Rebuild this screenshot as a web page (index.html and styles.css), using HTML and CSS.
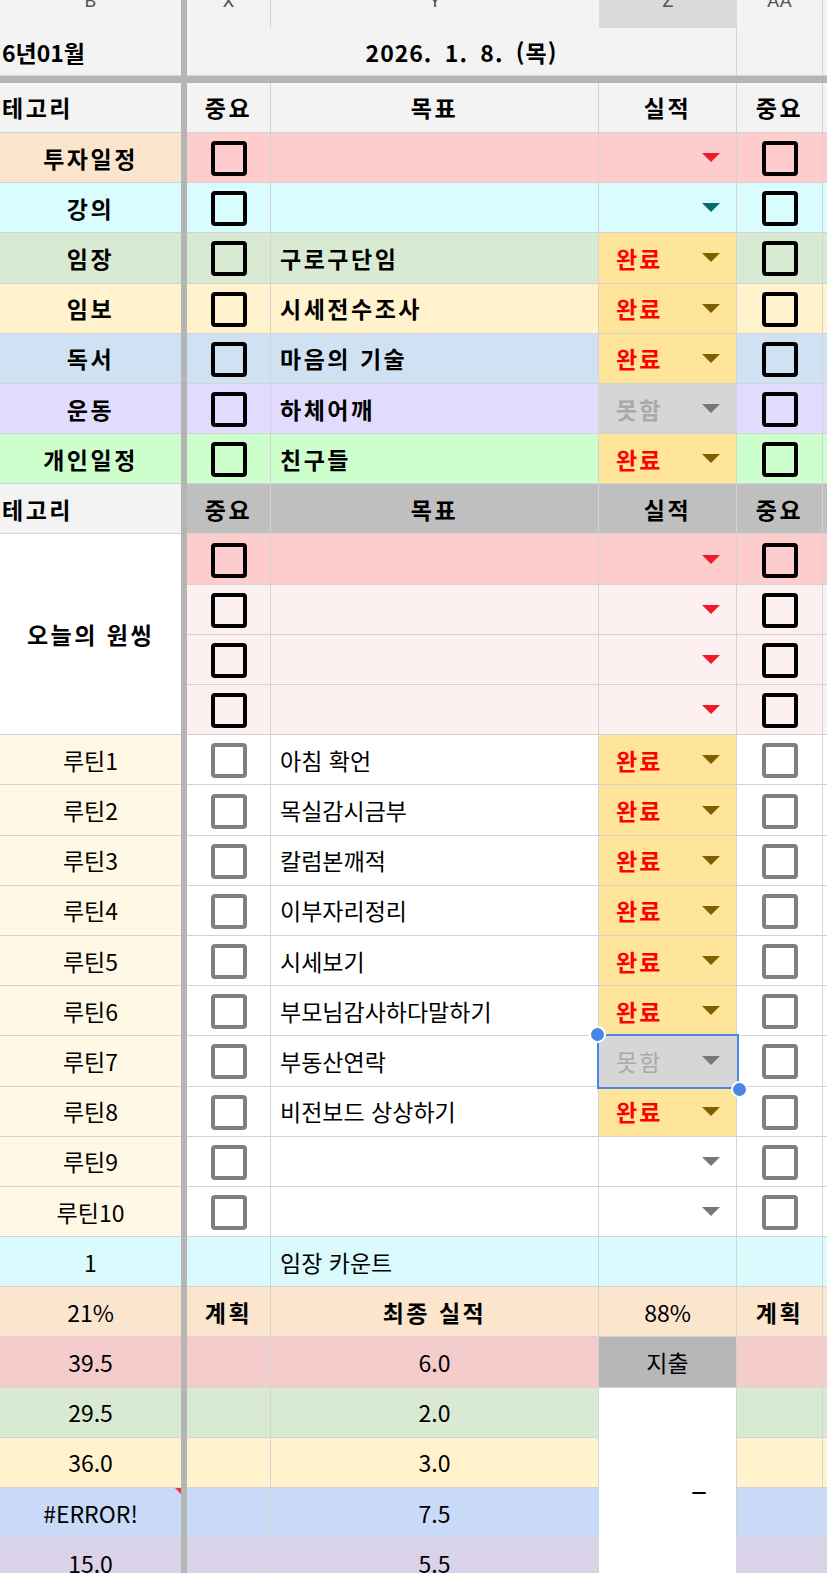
FILE: index.html
```html
<!DOCTYPE html>
<html lang="ko">
<head>
<meta charset="utf-8">
<title>Sheet</title>
<link rel="stylesheet" href="styles.css">
</head>
<body>
<div class="viewport">
  <div class="sheet">
    <div class="freeze-v"></div>
    <div class="freeze-h"></div>

    <div class="row colhead">
      <div class="c b"><span class="letter">B</span></div>
      <div class="c"><span class="letter">X</span></div>
      <div class="c nb"><span class="letter">Y</span></div>
      <div class="c nb selcol"><span class="letter">Z</span></div>
      <div class="c"><span class="letter">AA</span></div>
      <div class="c e"></div>
    </div>

    <div class="row head">
      <div class="c b left bold">6년01월</div>
      <div class="c date bold">2026. 1. 8. (목)</div>
      <div class="c"></div>
      <div class="c e"></div>
    </div>

    <div class="row head">
      <div class="c b left bold sp">테고리</div>
      <div class="c bold sp">중요</div>
      <div class="c bold sp">목표</div>
      <div class="c bold sp">실적</div>
      <div class="c bold sp">중요</div>
      <div class="c e"></div>
    </div>

    <div class="row invest">
      <div class="c b bold sp">투자일정</div>
      <div class="c"><span class="cb"></span></div>
      <div class="c goal bold sp"></div>
      <div class="c status"><span class="dd red"></span></div>
      <div class="c"><span class="cb"></span></div>
      <div class="c e"></div>
    </div>

    <div class="row lecture">
      <div class="c b bold sp">강의</div>
      <div class="c"><span class="cb"></span></div>
      <div class="c goal bold sp"></div>
      <div class="c status"><span class="dd teal"></span></div>
      <div class="c"><span class="cb"></span></div>
      <div class="c e"></div>
    </div>

    <div class="row site">
      <div class="c b bold sp">임장</div>
      <div class="c"><span class="cb"></span></div>
      <div class="c goal bold sp">구로구단임</div>
      <div class="c status done"><span class="st">완료</span><span class="dd gold"></span></div>
      <div class="c"><span class="cb"></span></div>
      <div class="c e"></div>
    </div>

    <div class="row report">
      <div class="c b bold sp">임보</div>
      <div class="c"><span class="cb"></span></div>
      <div class="c goal bold sp">시세전수조사</div>
      <div class="c status done"><span class="st">완료</span><span class="dd gold"></span></div>
      <div class="c"><span class="cb"></span></div>
      <div class="c e"></div>
    </div>

    <div class="row reading">
      <div class="c b bold sp">독서</div>
      <div class="c"><span class="cb"></span></div>
      <div class="c goal bold sp">마음의 기술</div>
      <div class="c status done"><span class="st">완료</span><span class="dd gold"></span></div>
      <div class="c"><span class="cb"></span></div>
      <div class="c e"></div>
    </div>

    <div class="row exercise">
      <div class="c b bold sp">운동</div>
      <div class="c"><span class="cb"></span></div>
      <div class="c goal bold sp">하체어깨</div>
      <div class="c status miss"><span class="st">못함</span><span class="dd grey"></span></div>
      <div class="c"><span class="cb"></span></div>
      <div class="c e"></div>
    </div>

    <div class="row personal">
      <div class="c b bold sp">개인일정</div>
      <div class="c"><span class="cb"></span></div>
      <div class="c goal bold sp">친구들</div>
      <div class="c status done"><span class="st">완료</span><span class="dd gold"></span></div>
      <div class="c"><span class="cb"></span></div>
      <div class="c e"></div>
    </div>

    <div class="row head2">
      <div class="c b left bold sp">테고리</div>
      <div class="c bold sp">중요</div>
      <div class="c bold sp">목표</div>
      <div class="c bold sp">실적</div>
      <div class="c bold sp">중요</div>
      <div class="c e"></div>
    </div>

    <div class="c b bold sp one-label">오늘의 원씽</div>
    <div class="row one first">
      <div class="c"><span class="cb"></span></div>
      <div class="c goal"></div>
      <div class="c status"><span class="dd red"></span></div>
      <div class="c"><span class="cb"></span></div>
      <div class="c e"></div>
    </div>
    <div class="row one">
      <div class="c"><span class="cb"></span></div>
      <div class="c goal"></div>
      <div class="c status"><span class="dd red"></span></div>
      <div class="c"><span class="cb"></span></div>
      <div class="c e"></div>
    </div>
    <div class="row one">
      <div class="c"><span class="cb"></span></div>
      <div class="c goal"></div>
      <div class="c status"><span class="dd red"></span></div>
      <div class="c"><span class="cb"></span></div>
      <div class="c e"></div>
    </div>
    <div class="row one">
      <div class="c"><span class="cb"></span></div>
      <div class="c goal"></div>
      <div class="c status"><span class="dd red"></span></div>
      <div class="c"><span class="cb"></span></div>
      <div class="c e"></div>
    </div>

    <div class="row routine">
      <div class="c b">루틴1</div>
      <div class="c"><span class="cb grey"></span></div>
      <div class="c goal">아침 확언</div>
      <div class="c status done"><span class="st">완료</span><span class="dd gold"></span></div>
      <div class="c"><span class="cb grey"></span></div>
      <div class="c e"></div>
    </div>
    <div class="row routine">
      <div class="c b">루틴2</div>
      <div class="c"><span class="cb grey"></span></div>
      <div class="c goal">목실감시금부</div>
      <div class="c status done"><span class="st">완료</span><span class="dd gold"></span></div>
      <div class="c"><span class="cb grey"></span></div>
      <div class="c e"></div>
    </div>
    <div class="row routine">
      <div class="c b">루틴3</div>
      <div class="c"><span class="cb grey"></span></div>
      <div class="c goal">칼럼본깨적</div>
      <div class="c status done"><span class="st">완료</span><span class="dd gold"></span></div>
      <div class="c"><span class="cb grey"></span></div>
      <div class="c e"></div>
    </div>
    <div class="row routine">
      <div class="c b">루틴4</div>
      <div class="c"><span class="cb grey"></span></div>
      <div class="c goal">이부자리정리</div>
      <div class="c status done"><span class="st">완료</span><span class="dd gold"></span></div>
      <div class="c"><span class="cb grey"></span></div>
      <div class="c e"></div>
    </div>
    <div class="row routine">
      <div class="c b">루틴5</div>
      <div class="c"><span class="cb grey"></span></div>
      <div class="c goal">시세보기</div>
      <div class="c status done"><span class="st">완료</span><span class="dd gold"></span></div>
      <div class="c"><span class="cb grey"></span></div>
      <div class="c e"></div>
    </div>
    <div class="row routine">
      <div class="c b">루틴6</div>
      <div class="c"><span class="cb grey"></span></div>
      <div class="c goal">부모님감사하다말하기</div>
      <div class="c status done"><span class="st">완료</span><span class="dd gold"></span></div>
      <div class="c"><span class="cb grey"></span></div>
      <div class="c e"></div>
    </div>
    <div class="row routine">
      <div class="c b">루틴7</div>
      <div class="c"><span class="cb grey"></span></div>
      <div class="c goal">부동산연락</div>
      <div class="c status miss light selected">
        <span class="st">못함</span><span class="dd grey"></span>
        <span class="handle tl"></span><span class="handle br"></span>
      </div>
      <div class="c"><span class="cb grey"></span></div>
      <div class="c e"></div>
    </div>
    <div class="row routine">
      <div class="c b">루틴8</div>
      <div class="c"><span class="cb grey"></span></div>
      <div class="c goal">비전보드 상상하기</div>
      <div class="c status done"><span class="st">완료</span><span class="dd gold"></span></div>
      <div class="c"><span class="cb grey"></span></div>
      <div class="c e"></div>
    </div>
    <div class="row routine">
      <div class="c b">루틴9</div>
      <div class="c"><span class="cb grey"></span></div>
      <div class="c goal"></div>
      <div class="c status"><span class="dd grey"></span></div>
      <div class="c"><span class="cb grey"></span></div>
      <div class="c e"></div>
    </div>
    <div class="row routine">
      <div class="c b">루틴10</div>
      <div class="c"><span class="cb grey"></span></div>
      <div class="c goal"></div>
      <div class="c status"><span class="dd grey"></span></div>
      <div class="c"><span class="cb grey"></span></div>
      <div class="c e"></div>
    </div>

    <div class="row count">
      <div class="c b">1</div>
      <div class="c"></div>
      <div class="c goal">임장 카운트</div>
      <div class="c"></div>
      <div class="c"></div>
      <div class="c e"></div>
    </div>

    <div class="row pct">
      <div class="c b">21%</div>
      <div class="c bold sp">계획</div>
      <div class="c bold sp">최종 실적</div>
      <div class="c">88%</div>
      <div class="c bold sp">계획</div>
      <div class="c e"></div>
    </div>

    <div class="row r-red">
      <div class="c b">39.5</div>
      <div class="c"></div>
      <div class="c">6.0</div>
      <div class="c spend">지출</div>
      <div class="c"></div>
      <div class="c e"></div>
    </div>
    <div class="row r-green">
      <div class="c b">29.5</div>
      <div class="c"></div>
      <div class="c">2.0</div>
      <div class="c spend-value">–</div>
      <div class="c"></div>
      <div class="c e"></div>
    </div>
    <div class="row r-yellow">
      <div class="c b">36.0</div>
      <div class="c"></div>
      <div class="c">3.0</div>
      <div class="c"></div>
      <div class="c e"></div>
    </div>
    <div class="row r-blue">
      <div class="c b err">#ERROR!</div>
      <div class="c"></div>
      <div class="c">7.5</div>
      <div class="c"></div>
      <div class="c e"></div>
    </div>
    <div class="row r-purple">
      <div class="c b">15.0</div>
      <div class="c"></div>
      <div class="c">5.5</div>
      <div class="c"></div>
      <div class="c e"></div>
    </div>
  </div>
</div>
</body>
</html>
```

FILE: styles.css
```css
html, body {
  margin: 0;
  padding: 0;
  background: #ffffff;
}

body {
  font-family: "Noto Sans CJK KR", "Noto Sans", sans-serif;
  font-size: 23px;
  color: #000000;
}

.viewport {
  width: 827px;
  height: 1573px;
  overflow: hidden;
}

.sheet {
  display: grid;
  grid-template-columns: 181px 6px 84px 328px 138px 86px 4px;
  grid-template-rows: 28px 48px 6.8px repeat(30, 50.2px);
  background: #ffffff;
}

.freeze-v {
  grid-column: 2;
  grid-row: 1 / -1;
  background: #b5b5b5;
}

.freeze-h {
  grid-column: 1 / -1;
  grid-row: 3;
  background: #b5b5b5;
}

.row {
  display: contents;
}

.c {
  box-sizing: border-box;
  min-width: 0;
  display: flex;
  align-items: center;
  justify-content: center;
  overflow: hidden;
  white-space: nowrap;
  border-right: 1px solid #d3d3d3;
  border-bottom: 1px solid #d3d3d3;
}

.c.b {
  border-right: none;
}

.c.e {
  border-right: none;
}

.left {
  justify-content: flex-start;
  padding-left: 2px;
}

.bold {
  font-weight: 700;
}

.sp {
  letter-spacing: 2.5px;
}

.goal {
  justify-content: flex-start;
  padding-left: 9px;
}

/* column letters row */
.colhead .c {
  background: #f3f3f3;
  border-bottom: none;
  align-items: flex-start;
}

.colhead .c.nb {
  border-right: none;
}

.colhead .c.selcol {
  background: #dadada;
}

.letter {
  font-family: Roboto, "Noto Sans", sans-serif;
  font-size: 19px;
  line-height: 19px;
  color: #555555;
  margin-top: -9px;
}

/* header rows */
.head .c {
  background: #f3f3f3;
}

.date {
  grid-column: span 3;
  letter-spacing: 1px;
  word-spacing: 5px;
}

.head2 .c {
  background: #bfbfbf;
}

.head2 .c.b {
  background: #f3f3f3;
}

/* checkboxes */
.cb {
  display: block;
  box-sizing: border-box;
  width: 36px;
  height: 35px;
  margin-top: 2px;
  border: 4px solid #000000;
  border-radius: 4px;
}

.cb.grey {
  border-color: #808080;
}

/* dropdown cells */
.status {
  justify-content: flex-start;
  padding: 0 16px 0 17px;
}

.st {
  font-weight: 700;
  letter-spacing: 2px;
}

.dd {
  width: 0;
  height: 0;
  margin-left: auto;
  border-left: 9.5px solid transparent;
  border-right: 9.5px solid transparent;
  border-top: 9px solid #777777;
}

.dd.red { border-top-color: #ee1b2b; }
.dd.teal { border-top-color: #0c6a6a; }
.dd.gold { border-top-color: #7f6000; }
.dd.grey { border-top-color: #777777; }

.row .status.done {
  background: #ffe599;
}

.status.done .st {
  color: #ff0000;
}

.row .status.miss {
  background: #d6d6d6;
}

.status.miss .st {
  color: #a9a9a9;
}

.status.miss.light .st {
  font-weight: 400;
}

/* selection */
.selected {
  position: relative;
  overflow: visible;
  z-index: 2;
}

.selected::after {
  content: "";
  position: absolute;
  top: -2px;
  left: -2px;
  right: -3px;
  bottom: -3px;
  border: 2px solid #4a86e8;
  pointer-events: none;
}

.handle {
  position: absolute;
  width: 13px;
  height: 13px;
  border-radius: 50%;
  background: #4a86e8;
  border: 2px solid #ffffff;
  z-index: 3;
}

.handle.tl {
  top: -10px;
  left: -10px;
}

.handle.br {
  bottom: -12px;
  right: -12px;
}

/* category row colours */
.invest .c { background: #fdcdcd; }
.invest .c.b { background: #fce5cd; }
.lecture .c { background: #d9fcff; }
.site .c { background: #d9ead3; }
.report .c { background: #fff2cc; }
.reading .c { background: #cfe2f3; }
.exercise .c { background: #e1dcfd; }
.personal .c { background: #ccffcc; }

/* one thing */
.one-label {
  grid-row: span 4;
  background: #ffffff;
}

.one .c { background: #fdf0f0; }
.one.first .c { background: #fdcdcd; }

/* routines */
.routine .c.b { background: #fef8e4; }

/* bottom */
.count .c { background: #dbfafe; }
.pct .c { background: #fce5cd; }
.r-red .c { background: #f4cccc; }
.r-green .c { background: #d9ead3; }
.r-yellow .c { background: #fff2cc; }
.r-blue .c { background: #c9daf8; }
.r-purple .c { background: #d9d2e9; }

.row .c.spend {
  background: #b7b7b7;
}

.row .c.spend-value {
  grid-row: span 4;
  background: #ffffff;
  justify-content: flex-end;
  padding-right: 29px;
  font-size: 30px;
}

.err {
  position: relative;
}

.err::after {
  content: "";
  position: absolute;
  top: 0;
  right: 0;
  border-top: 6px solid #e53935;
  border-left: 6px solid transparent;
}
```
